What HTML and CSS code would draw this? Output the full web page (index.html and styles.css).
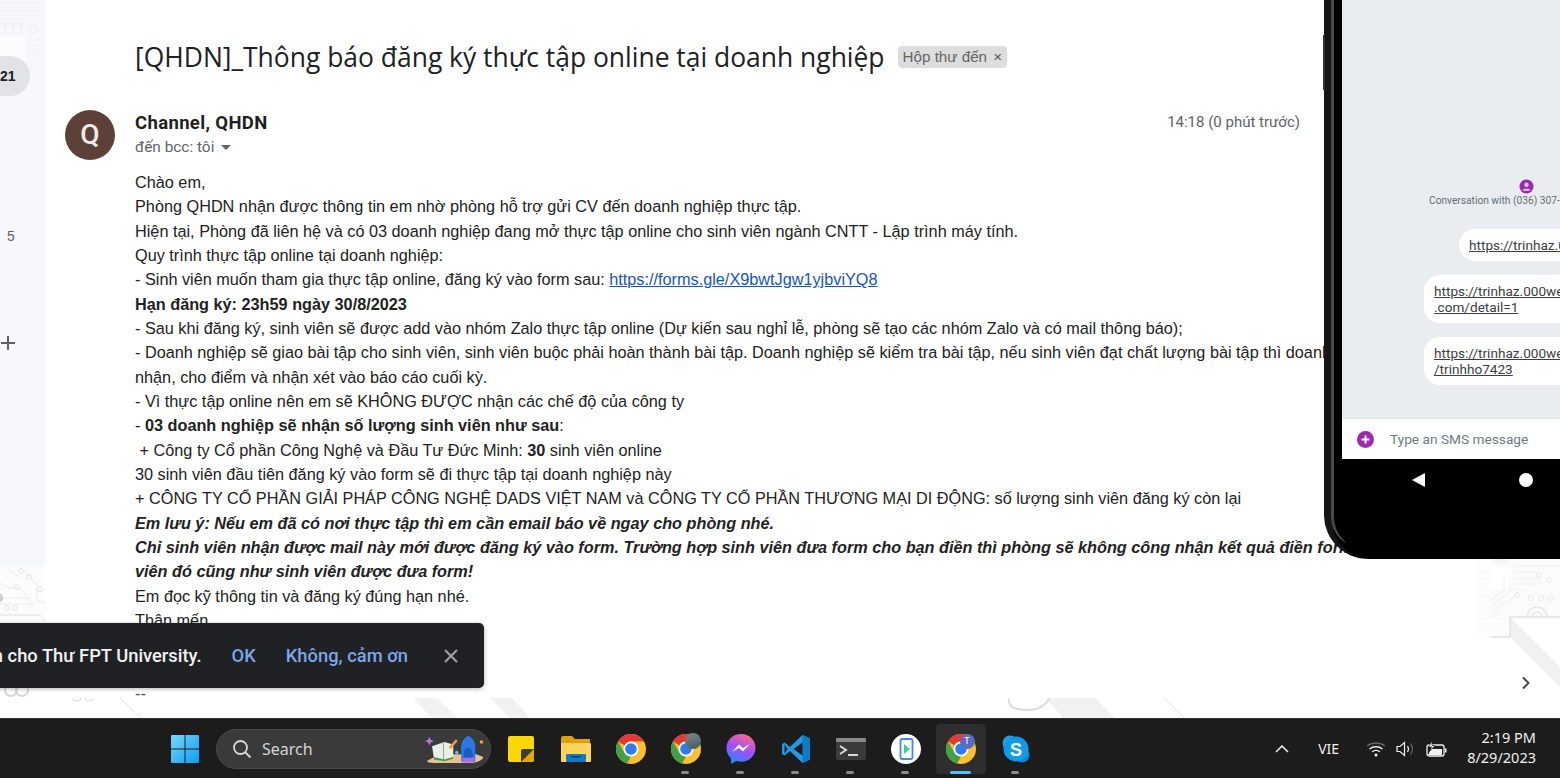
FILE: index.html
```html
<!DOCTYPE html>
<html lang="vi">
<head>
  <meta charset="UTF-8">
  <meta name="viewport" content="width=device-width, initial-scale=1.0">
  <title>Hộp thư đến</title>
  <link rel="stylesheet" href="styles.css">
</head>
<body>
  <div class="screen">
    <div class="desktop">
      <!-- hoa van nen cua theme -->
      <svg class="wallpaper" width="1560" height="718" viewBox="0 0 1560 718" fill="none">
        <!-- goc phai -->
        <rect x="1470" y="558" width="40" height="79" fill="#fdfdfd"/>
        <rect x="1490" y="558" width="70" height="59" fill="#fbfbfb"/>
        <rect x="1490" y="568" width="22" height="22" fill="#fff"/>
        <path d="M1470 572H1490M1470 578H1490M1470 584H1490M1470 596H1490M1470 608H1490M1470 618H1510M1470 624H1510" stroke="#f6f6f6"/>
        <path d="M1492 560H1510M1496 558V564M1500 558V564M1504 558V564M1508 558V564" stroke="#ededed"/>
        <path d="M1514 566H1560M1514 572H1535M1514 578H1538M1514 584H1540M1514 590H1525" stroke="#f0f0f0"/>
        <path d="M1491 600L1504 590V575M1491 606L1510 592V575M1491 612L1516 596V592M1491 618L1500 610" stroke="#eeeeee"/>
        <circle cx="1517" cy="595" r="2.500" stroke="#eaeaea"/>
        <circle cx="1531" cy="598" r="2.500" stroke="#eaeaea"/>
        <circle cx="1541" cy="598" r="2.500" stroke="#eaeaea"/>
        <circle cx="1551" cy="598" r="2.500" stroke="#eaeaea"/>
        <circle cx="1539" cy="575" r="2.500" stroke="#eaeaea"/>
        <circle cx="1549" cy="580" r="2.500" stroke="#eaeaea"/>
        <path d="M1527 617A10 10 0 0 1 1547 617M1532 617A5 5 0 0 1 1542 617" stroke="#e8e8e8" stroke-width="1.500"/>
        <path d="M1510 617L1560 667V687L1510 637Z" fill="#f1f1f1"/>
        <path d="M1510 617H1560M1510 617V637H1490" stroke="#e2e2e2" stroke-width="1.500"/>
        <!-- duoi mail -->
        <path d="M1046 698L1063 718H1115L1095 698Z" fill="#f1f1f1"/>
        <path d="M1164 698L1184 718" stroke="#e6e6e6"/>
        <path d="M1009 699C1008 708 1016 710 1030 710C1040 710 1046 704 1050 698" stroke="#dddddd" stroke-width="2"/>
        <path d="M413 698L432 718H458L437 698ZM490 698L510 718H530L512 698Z" fill="#f2f2f2"/>
        <path d="M120 698L141 718" stroke="#e2e2e2"/>
        <path d="M73 698A4 3 0 0 0 81 698M85 698A4 3 0 0 0 93 698" stroke="#dddddd"/>
        <circle cx="11" cy="690" r="6" stroke="#d8d8d8" stroke-width="2"/>
        <circle cx="22" cy="690" r="6" stroke="#d8d8d8" stroke-width="2"/>
        <!-- vien tren -->
        <path d="M45 2H340M45 5H300" stroke="#f9f9f9"/>
      </svg>

      <aside class="rail">
        <svg class="rail-art" width="45" height="623" viewBox="0 0 45 623" fill="none">
          <path d="M0 3H45M0 7H45M0 11H45M0 15H45M0 19H45" stroke="#f0f2f6"/>
          <path d="M5 26V36M13 26V36M21 26V36" stroke="#ebedf1"/>
          <circle cx="5" cy="24" r="2" stroke="#e8eaee"/>
          <circle cx="13" cy="24" r="2" stroke="#e8eaee"/>
          <circle cx="21" cy="24" r="2" stroke="#e8eaee"/>
          <circle cx="33" cy="29" r="4" stroke="#eceef2"/>
          <path d="M27 40H45M27 45H45M27 50H45M27 55H45" stroke="#f1f3f7"/>
          <rect x="-4" y="35" width="29" height="30" rx="3" fill="#fbfcfe"/>
          <rect y="566" width="45" height="57" fill="#fcfcfc"/>
          <path d="M10 570L20 578M24 570L37 585V600L45 604M0 583L10 588H20L30 600V606M0 598H30M0 604H34" stroke="#ececec"/>
          <circle cx="21" cy="571" r="2.500" stroke="#e6e6e6"/>
          <circle cx="29" cy="577" r="2.500" stroke="#e6e6e6"/>
          <circle cx="17" cy="587" r="2.500" stroke="#e6e6e6"/>
          <circle cx="40" cy="589" r="2.500" stroke="#e6e6e6"/>
          <circle cx="7" cy="608" r="2.500" stroke="#e6e6e6"/>
          <circle cx="15" cy="608" r="2.500" stroke="#e6e6e6"/>
          <path d="M0 615H40L45 621" stroke="#dddddd"/>
          <circle cx="-2" cy="598" r="5" fill="#cfcfcf"/>
        </svg>
        <div class="rail-count">21</div>
        <div class="rail-num">5</div>
        <svg class="rail-plus" width="16" height="16" viewBox="0 0 16 16" fill="none">
          <path d="M8 1V15M1 8H15" stroke="#5f6368" stroke-width="2"/>
        </svg>
      </aside>

      <main class="mail">
        <div class="subject-row">
          <h1 class="subject">[QHDN]_Thông báo đăng ký thực tập online tại doanh nghiệp</h1>
          <span class="chip">Hộp thư đến <span class="chip-x">×</span></span>
        </div>

        <div class="message">
          <div class="avatar">Q</div>
          <div class="message-main">
            <div class="sender-row">
              <div class="sender">Channel, QHDN</div>
              <div class="time">14:18 (0 phút trước)</div>
            </div>
            <div class="to">đến bcc: tôi <span class="to-caret"></span></div>

            <div class="mail-body">
              <div>Chào em,</div>
              <div>Phòng QHDN nhận được thông tin em nhờ phòng hỗ trợ gửi CV đến doanh nghiệp thực tập.</div>
              <div>Hiện tại, Phòng đã liên hệ và có 03 doanh nghiệp đang mở thực tập online cho sinh viên ngành CNTT - Lập trình máy tính.</div>
              <div>Quy trình thực tập online tại doanh nghiệp:</div>
              <div>- Sinh viên muốn tham gia thực tập online, đăng ký vào form sau: <a href="#">https://forms.gle/X9bwtJgw1yjbviYQ8</a></div>
              <div><b>Hạn đăng ký: 23h59 ngày 30/8/2023</b></div>
              <div>- Sau khi đăng ký, sinh viên sẽ được add vào nhóm Zalo thực tập online (Dự kiến sau nghỉ lễ, phòng sẽ tạo các nhóm Zalo và có mail thông báo);</div>
              <div>- Doanh nghiệp sẽ giao bài tập cho sinh viên, sinh viên buộc phải hoàn thành bài tập. Doanh nghiệp sẽ kiểm tra bài tập, nếu sinh viên đạt chất lượng bài tập thì doanh</div>
              <div>nhận, cho điểm và nhận xét vào báo cáo cuối kỳ.</div>
              <div>- Vì thực tập online nên em sẽ KHÔNG ĐƯỢC nhận các chế độ của công ty</div>
              <div>- <b>03 doanh nghiệp sẽ nhận số lượng sinh viên như sau</b>:</div>
              <div>&nbsp;+ Công ty Cổ phần Công Nghệ và Đầu Tư Đức Minh: <b>30</b> sinh viên online</div>
              <div>30 sinh viên đầu tiên đăng ký vào form sẽ đi thực tập tại doanh nghiệp này</div>
              <div>+ CÔNG TY CỔ PHẦN GIẢI PHÁP CÔNG NGHỆ DADS VIỆT NAM và CÔNG TY CỔ PHẦN THƯƠNG MẠI DI ĐỘNG: số lượng sinh viên đăng ký còn lại</div>
              <div><b><i>Em lưu ý: Nếu em đã có nơi thực tập thì em cần email báo về ngay cho phòng nhé.</i></b></div>
              <div><b><i>Chỉ sinh viên nhận được mail này mới được đăng ký vào form. Trường hợp sinh viên đưa form cho bạn điền thì phòng sẽ không công nhận kết quả điền form</i></b></div>
              <div><b><i>viên đó cũng như sinh viên được đưa form!</i></b></div>
              <div>Em đọc kỹ thông tin và đăng ký đúng hạn nhé.</div>
              <div>Thân mến</div>
              <div>&nbsp;</div>
              <div>&nbsp;</div>
              <div class="sig">--</div>
            </div>
          </div>
        </div>
      </main>

      <svg class="side-chevron" width="10" height="14" viewBox="0 0 10 14" fill="none">
        <path d="M2 1.500L7.500 7L2 12.500" stroke="#444b50" stroke-width="2"/>
      </svg>

      <!-- may ao android -->
      <div class="phone">
        <div class="phone-btn"></div>
        <div class="phone-screen">
          <div class="chat">
            <svg class="chat-icon" width="15" height="15" viewBox="0 0 15 15">
              <circle cx="7.500" cy="7.500" r="7" fill="#9c27b0"/>
              <circle cx="7.500" cy="5.800" r="2.200" fill="#e1bee7"/>
              <path d="M3.500 11C4 9.200 11 9.200 11.500 11C10 12.300 5 12.300 3.500 11Z" fill="#e1bee7"/>
            </svg>
            <div class="chat-title">Conversation with (036) 307-7423</div>
            <div class="bubble bubble-a"><u>https://trinhaz.000webhostapp.com</u></div>
            <div class="bubble"><u>https://trinhaz.000webhostapp</u><br><u>.com/detail=1</u></div>
            <div class="bubble"><u>https://trinhaz.000webhostapp.com</u><br><u>/trinhho7423</u></div>
          </div>
          <div class="sms-bar">
            <svg width="17" height="17" viewBox="0 0 17 17">
              <circle cx="8.500" cy="8.500" r="8.500" fill="#9c27b0"/>
              <path d="M8.500 4.500V12.500M4.500 8.500H12.500" stroke="#fff" stroke-width="2"/>
            </svg>
            <span class="sms-hint">Type an SMS message</span>
          </div>
          <div class="phone-nav">
            <span class="nav-back"></span>
            <span class="nav-home"></span>
          </div>
        </div>
      </div>

      <div class="toast">
        <span class="toast-text">Bật thông báo trên màn hình cho Thư FPT University.</span>
        <span class="toast-link">OK</span>
        <span class="toast-link">Không, cảm ơn</span>
        <svg class="toast-x" width="16" height="16" viewBox="0 0 16 16" fill="none">
          <path d="M2 2L14 14M14 2L2 14" stroke="#9aa0a6" stroke-width="2.200"/>
        </svg>
      </div>
    </div>

    <footer class="taskbar">
      <svg class="winlogo" width="30" height="30" viewBox="0 0 30 30">
        <defs>
          <linearGradient id="winblue" x1="0" y1="0" x2="1" y2="1">
            <stop offset="0" stop-color="#74d9ff"/>
            <stop offset="1" stop-color="#0f9bf0"/>
          </linearGradient>
        </defs>
        <path d="M1 2A1 1 0 0 1 2 1H14.500V14.500H1ZM15.500 1H28A1 1 0 0 1 29 2V14.500H15.500ZM1 15.500H14.500V29H2A1 1 0 0 1 1 28ZM15.500 15.500H29V28A1 1 0 0 1 28 29H15.500Z" fill="url(#winblue)"/>
      </svg>

      <div class="search">
        <svg width="20" height="20" viewBox="0 0 20 20" fill="none">
          <circle cx="8.500" cy="8.500" r="6.500" stroke="#d8d8d8" stroke-width="1.800"/>
          <path d="M13.500 13.500L18.500 18.500" stroke="#d8d8d8" stroke-width="1.800"/>
        </svg>
        <span class="search-label">Search</span>
        <svg class="search-art" width="60" height="30" viewBox="0 0 68 34">
          <path d="M6 0L7.500 3.500L11 5L7.500 6.500L6 10L4.500 6.500L1 5L4.500 3.500Z" fill="#c86be0" transform="translate(-1 3)"/>
          <path d="M2 31C10 25 20 23 30 23H58L66 26C66 30 56 33 50 33H10C6 33 3 32 2 31Z" fill="#e8c48c"/>
          <path d="M8 14L22 9L32 12V26L22 29L10 27Z" fill="#e9efe6"/>
          <path d="M10 26L22 29L32 26V28L22 31L10 29Z" fill="#3e9e58"/>
          <path d="M21 10V29" stroke="#8a9a88"/>
          <path d="M28 16L36 7" stroke="#f2963c" stroke-width="3"/>
          <circle cx="36" cy="21" r="2" fill="#57c7d8"/>
          <path d="M41 30V14C41 8 45 4 49 2C53 4 57 8 57 14V30C57 31 56 32 55 32H43C42 32 41 31 41 30Z" fill="#2a78e6"/>
          <path d="M44 30V22C44 18 46 16 49 16C52 16 54 18 54 22V30Z" fill="#1a5cc8"/>
          <path d="M42 27H56V30C56 31 55 32 54 32H44C43 32 42 31 42 30Z" fill="#a86cf0"/>
          <circle cx="64" cy="9" r="2" fill="#f5a623"/>
        </svg>
      </div>

      <div class="apps">
        <div class="app">
          <svg width="30" height="30" viewBox="0 0 30 30">
            <rect x="2" y="2" width="26" height="26" rx="2" fill="#fdd800"/>
            <path d="M15 28V17A2 2 0 0 1 17 15H28V26A2 2 0 0 1 26 28Z" fill="#e4a800"/>
            <path d="M15 28V17A2 2 0 0 1 17 15H28Z" fill="#3d3a34"/>
          </svg>
        </div>
        <div class="app">
          <svg width="32" height="30" viewBox="0 0 32 30">
            <path d="M1 4A2 2 0 0 1 3 2H12L15 5H30V27A1 1 0 0 1 29 28H2A1 1 0 0 1 1 27Z" fill="#e3a008"/>
            <path d="M1 9H30A1 1 0 0 1 31 10V27A1 1 0 0 1 30 28H2A1 1 0 0 1 1 27Z" fill="#ffd35c"/>
            <rect x="6" y="20" width="20" height="8" rx="1" fill="#0f7ac8"/>
            <rect x="11" y="22" width="10" height="1.500" fill="#073f6e"/>
          </svg>
        </div>
        <div class="app">
          <svg width="30" height="30"><use href="#chrome"/></svg>
        </div>
        <div class="app app-open">
          <svg width="30" height="30"><use href="#chrome"/></svg>
          <span class="profile-badge profile-photo"></span>
        </div>
        <div class="app app-open">
          <svg width="30" height="32" viewBox="0 0 30 32">
            <defs>
              <linearGradient id="messenger" x1="0.300" y1="1" x2="0.700" y2="0">
                <stop offset="0" stop-color="#1e8bff"/>
                <stop offset="0.500" stop-color="#a24dff"/>
                <stop offset="1" stop-color="#ff6a8a"/>
              </linearGradient>
            </defs>
            <path d="M15 1C6.800 1 0.500 7 0.500 15C0.500 19.200 2.200 22.800 5 25.300V31L10.300 28C11.800 28.500 13.400 28.700 15 28.700C23.200 28.700 29.500 22.700 29.500 15C29.500 7 23.200 1 15 1Z" fill="url(#messenger)"/>
            <path d="M6 19L13 11.500L17 15L24 11L17 18.500L13 15Z" fill="#fff"/>
          </svg>
        </div>
        <div class="app app-open">
          <svg width="30" height="30" viewBox="0 0 30 30">
            <path d="M21.500 1L29 4.500V25.500L21.500 29L9 17L3.500 21.500L1 20V10L3.500 8.500L9 13Z" fill="#1f9ce8"/>
            <path d="M21.500 1L29 4.500V25.500L21.500 29Z" fill="#0b7bc7"/>
            <path d="M21.500 8.500L12.500 15L21.500 21.500Z" fill="#1c1c1c"/>
            <path d="M3.500 10.500L6.500 15L3.500 19.500Z" fill="#1c1c1c"/>
          </svg>
        </div>
        <div class="app app-open">
          <svg width="30" height="22" viewBox="0 0 30 22" fill="none">
            <rect width="30" height="22" rx="2" fill="#3a3a3a"/>
            <rect width="30" height="4" rx="1" fill="#8a8a8a"/>
            <path d="M4 8L10 12L4 16" stroke="#d8d8d8" stroke-width="2"/>
            <path d="M12 17H22" stroke="#d8d8d8" stroke-width="2"/>
          </svg>
        </div>
        <div class="app app-open">
          <svg width="30" height="30" viewBox="0 0 30 30">
            <circle cx="15" cy="15" r="15" fill="#fff"/>
            <rect x="9.500" y="5" width="12" height="20" rx="1.500" fill="none" stroke="#4285f4" stroke-width="1.800"/>
            <path d="M13 10L19 15L13 20Z" fill="#34d399"/>
          </svg>
        </div>
        <div class="app app-active">
          <svg width="30" height="30"><use href="#chrome"/></svg>
          <span class="profile-badge profile-t">T</span>
        </div>
        <div class="app app-open">
          <svg width="28" height="28" viewBox="0 0 28 28">
            <circle cx="8" cy="8" r="7.500" fill="#1ba1e8"/>
            <circle cx="20" cy="20" r="7.500" fill="#0a8ad6"/>
            <circle cx="14" cy="14" r="12.500" fill="#129ae2"/>
            <text class="skype-s" x="14" y="20.500" text-anchor="middle">S</text>
          </svg>
        </div>
      </div>

      <div class="tray">
        <svg class="tray-up" width="14" height="8" viewBox="0 0 14 8" fill="none">
          <path d="M1 7L7 1L13 7" stroke="#f0f0f0" stroke-width="1.500"/>
        </svg>
        <span class="tray-lang">VIE</span>
        <svg class="tray-wifi" width="20" height="16" viewBox="0 0 20 16" fill="none">
          <path d="M1 5C6 1 14 1 19 5" stroke="#666" stroke-width="1.300"/>
          <path d="M3.500 8C7 5 13 5 16.500 8M6 10.800C8.500 9 11.500 9 14 10.800" stroke="#f0f0f0" stroke-width="1.300"/>
          <circle cx="10" cy="14" r="1.500" fill="#f0f0f0"/>
        </svg>
        <svg class="tray-vol" width="20" height="16" viewBox="0 0 20 16" fill="none">
          <path d="M1 5.500H4L8.500 1.500V14.500L4 10.500H1Z" stroke="#f0f0f0" stroke-width="1.200"/>
          <path d="M11.500 5C12.700 6.800 12.700 9.200 11.500 11" stroke="#f0f0f0" stroke-width="1.200"/>
          <path d="M14.500 2.500C17 5.500 17 10.500 14.500 13.500" stroke="#666" stroke-width="1.200"/>
        </svg>
        <svg class="tray-batt" width="21" height="16" viewBox="0 0 21 16" fill="none">
          <rect x="1" y="4" width="17" height="11" rx="2" stroke="#f0f0f0" stroke-width="1.300"/>
          <rect x="19" y="7.500" width="1.500" height="4" fill="#f0f0f0"/>
          <path d="M2 14L5 8H16V14Z" fill="#f0f0f0"/>
          <path d="M6 0L2.500 6H5.500L4 10L9 4.500H6Z" fill="#f0f0f0" stroke="#1c1c1c" stroke-width="0.600"/>
        </svg>
        <div class="clock">
          <div>2:19 PM</div>
          <div>8/29/2023</div>
        </div>
      </div>
    </footer>
  </div>

  <!-- icon chrome dung chung -->
  <svg class="defs" width="0" height="0">
    <symbol id="chrome" viewBox="0 0 30 30">
      <circle cx="15" cy="15" r="15" fill="#fbc02d"/>
      <path d="M15 0A15 15 0 0 1 28 7.500H15A7.500 7.500 0 0 0 8.500 11.300L2 7.500A15 15 0 0 1 15 0Z" fill="#e53935"/>
      <path d="M2 7.500L8.500 18.700A7.500 7.500 0 0 0 15 22.500L11 29.500A15 15 0 0 1 2 7.500Z" fill="#43a047"/>
      <circle cx="15" cy="15" r="7.500" fill="#fff"/>
      <circle cx="15" cy="15" r="5.800" fill="#2f7cf0"/>
    </symbol>
  </svg>
</body>
</html>
```

FILE: styles.css
```css
* {
  margin: 0;
  padding: 0;
  box-sizing: border-box;
}

body {
  width: 1560px;
  height: 778px;
  overflow: hidden;
  font-family: "Liberation Sans", Arial, sans-serif;
  background-color: #fff;
}

.screen {
  display: flex;
  flex-direction: column;
  height: 778px;
}

.desktop {
  position: relative;
  flex: 0 0 718px;
  display: flex;
  align-items: flex-start;
  overflow: hidden;
}

.wallpaper {
  position: absolute;
  left: 0;
  top: 0;
}

.defs {
  position: absolute;
}

/* thanh ben trai */
.rail {
  position: relative;
  flex: 0 0 45px;
  height: 623px;
  padding-top: 56px;
  background-color: #f6f8fc;
}

.rail-art {
  position: absolute;
  left: 0;
  top: 0;
}

.rail-count {
  position: relative;
  width: 30px;
  height: 40px;
  line-height: 40px;
  font-size: 14px;
  font-weight: bold;
  color: #202124;
  background-color: #e1e3e6;
  border-radius: 0 20px 20px 0;
}

.rail-num {
  position: relative;
  margin-top: 131px;
  padding-left: 7px;
  font-size: 14px;
  line-height: 18px;
  color: #5f6368;
}

.rail-plus {
  position: relative;
  display: block;
  margin-top: 90px;
}

/* noi dung mail */
.mail {
  position: relative;
  flex: 0 0 1430px;
  height: 698px;
  padding: 39px 0 0 20px;
  background-color: #fff;
}

.subject-row {
  display: flex;
  align-items: center;
  gap: 13px;
  padding-left: 70px;
  height: 36px;
}

.subject {
  font-family: "Open Sans", sans-serif;
  font-size: 26.45px;
  font-weight: 400;
  color: #202124;
  white-space: nowrap;
}

.chip {
  height: 22px;
  padding: 0 5px;
  font-size: 15.2px;
  line-height: 22px;
  color: #666;
  background-color: #ddd;
  border-radius: 4px;
  white-space: nowrap;
}

.chip-x {
  margin-left: 2px;
  color: #555;
}

.message {
  display: flex;
  gap: 20px;
  margin-top: 35px;
}

.avatar {
  flex: 0 0 50px;
  height: 50px;
  line-height: 50px;
  text-align: center;
  font-family: Roboto, sans-serif;
  font-size: 28px;
  font-weight: 500;
  color: #f1e9e6;
  background-color: #5d4037;
  border-radius: 50%;
}

.message-main {
  flex: 1;
  min-width: 0;
}

.sender-row {
  display: flex;
  justify-content: space-between;
  width: 1165px;
  height: 24px;
  line-height: 24px;
}

.sender {
  margin-top: 1px;
  font-family: Roboto, sans-serif;
  font-size: 18.5px;
  font-weight: 700;
  letter-spacing: 0.35px;
  color: #1f1f1f;
}

.time {
  font-family: Roboto, sans-serif;
  font-size: 15px;
  color: #5f6368;
}

.to {
  margin-top: 1px;
  font-family: Roboto, sans-serif;
  font-size: 15.4px;
  line-height: 24px;
  color: #5f6368;
}

.to-caret {
  display: inline-block;
  margin-left: 3px;
  border-left: 5px solid transparent;
  border-right: 5px solid transparent;
  border-top: 5px solid #5f6368;
  vertical-align: middle;
}

.mail-body {
  margin-top: 11px;
  font-size: 16.25px;
  line-height: 24.33px;
  color: #222;
  white-space: nowrap;
}

.mail-body a {
  color: #1155cc;
}

.sig {
  height: 20px;
  color: #555;
}

.side-chevron {
  position: absolute;
  left: 1521px;
  top: 676px;
}

/* may ao */
.phone {
  position: absolute;
  left: 1324px;
  top: -40px;
  width: 300px;
  height: 599px;
  background-color: #000;
  border-radius: 0 0 0 44px;
  border-left: 7px solid #161616;
}

.phone::before {
  content: "";
  position: absolute;
  left: 0;
  top: 0;
  bottom: 12px;
  width: 40px;
  border-left: 3px solid #4a4a4a;
  border-radius: 0 0 0 30px;
}

.phone-btn {
  position: absolute;
  left: -8px;
  top: 75px;
  width: 2px;
  height: 55px;
  background-color: #333;
}

.phone-screen {
  position: relative;
  display: flex;
  flex-direction: column;
  height: 100%;
  margin-left: 11px;
  overflow: hidden;
  border-radius: 0 0 0 30px;
}

.chat {
  flex: 0 0 459px;
  display: flex;
  flex-direction: column;
  align-items: flex-start;
  padding: 219px 0 0 87px;
  background-color: #e9edf0;
  border-bottom: 1px solid #e2e5e8;
  overflow: hidden;
}

.chat-icon {
  margin-left: 90px;
  flex-shrink: 0;
}

.chat-title {
  margin-top: 0;
  font-family: Roboto, sans-serif;
  font-size: 10.2px;
  line-height: 14px;
  color: #5f6f7a;
  white-space: nowrap;
}

.bubble {
  flex-shrink: 0;
  margin-top: 14px;
  margin-left: -5px;
  padding: 8px 10px;
  width: 200px;
  font-family: Roboto, sans-serif;
  font-size: 13.6px;
  line-height: 16px;
  color: #3c4043;
  background-color: #fff;
  border-radius: 16px 0 0 16px;
  white-space: nowrap;
  overflow: hidden;
}

.bubble-a {
  margin-top: 21px;
  margin-left: 30px;
}

.sms-bar {
  flex: 0 0 40px;
  display: flex;
  align-items: center;
  gap: 16px;
  padding-left: 15px;
  background-color: #fff;
}

.sms-hint {
  font-family: Roboto, sans-serif;
  font-size: 13.7px;
  color: #6b7b85;
}

.phone-nav {
  flex: 1;
  display: flex;
  align-items: flex-start;
  gap: 94px;
  padding: 14px 0 0 70px;
  background-color: #000;
}

.nav-back {
  width: 0;
  height: 0;
  border-top: 7px solid transparent;
  border-bottom: 7px solid transparent;
  border-right: 13px solid #fff;
}

.nav-home {
  width: 14px;
  height: 14px;
  background-color: #fff;
  border-radius: 50%;
}

/* thong bao */
.toast {
  position: absolute;
  right: 1076px;
  top: 623px;
  height: 65px;
  display: flex;
  align-items: center;
  padding-right: 25px;
  background-color: #202124;
  border-radius: 0 5px 5px 0;
  box-shadow: 0 1px 4px rgba(0, 0, 0, 0.3);
  white-space: nowrap;
}

.toast-text {
  font-family: Roboto, sans-serif;
  font-size: 18.35px;
  font-weight: 500;
  color: #f1f3f4;
}

.toast-link {
  margin-left: 30px;
  font-family: Roboto, sans-serif;
  font-size: 18.35px;
  font-weight: 500;
  color: #7aa7e8;
}

.toast-x {
  margin-left: 35px;
}

/* taskbar */
.taskbar {
  flex: 0 0 60px;
  display: flex;
  align-items: center;
  padding-left: 170px;
  background-color: #1c1c1c;
  border-top: 1px solid #333;
}

.winlogo {
  flex-shrink: 0;
}

.search {
  display: flex;
  align-items: center;
  width: 275px;
  height: 40px;
  margin-left: 16px;
  padding: 0 5px 0 15px;
  background-color: #3a3a3a;
  border: 1px solid #4a4a4a;
  border-radius: 20px;
}

.search-label {
  margin-left: 10px;
  font-family: "Noto Sans", sans-serif;
  font-size: 16px;
  color: #d4d4d4;
}

.search-art {
  margin-left: auto;
}

.apps {
  display: flex;
  margin-left: 2px;
}

.app {
  position: relative;
  display: flex;
  align-items: center;
  justify-content: center;
  width: 55px;
  height: 50px;
}

.app-open::after,
.app-active::after {
  content: "";
  position: absolute;
  left: 23px;
  bottom: 0;
  width: 8px;
  height: 3px;
  background-color: #8a8a8a;
  border-radius: 2px;
}

.app-active {
  width: 50px;
  margin: 0 2.5px;
  background-color: #2e2e2e;
  border-radius: 4px;
}

.app-active::after {
  left: 14px;
  width: 21px;
  background-color: #4cc2ff;
}

.profile-badge {
  position: absolute;
  border-radius: 50%;
}

.profile-photo {
  left: 27px;
  top: 9px;
  width: 16px;
  height: 16px;
  background: linear-gradient(160deg, #7d8c88, #3f5a60);
}

.profile-t {
  left: 24px;
  top: 10px;
  width: 15px;
  height: 15px;
  font-family: Roboto, sans-serif;
  font-size: 9px;
  line-height: 15px;
  text-align: center;
  color: #fff;
  background-color: #5c6bc0;
}

.skype-s {
  font-family: "Liberation Sans", sans-serif;
  font-size: 18px;
  font-weight: bold;
  fill: #fff;
}

.tray {
  display: flex;
  align-items: center;
  margin-left: auto;
  padding-right: 24px;
  color: #f0f0f0;
  font-family: "Noto Sans", sans-serif;
}

.tray-lang {
  margin-left: 29px;
  font-size: 14px;
}

.tray-wifi {
  margin-left: 27px;
}

.tray-vol {
  margin-left: 10px;
}

.tray-batt {
  margin-left: 10px;
}

.clock {
  margin-left: 20px;
  margin-bottom: 3px;
  font-size: 14.5px;
  line-height: 20px;
  text-align: right;
}
```
